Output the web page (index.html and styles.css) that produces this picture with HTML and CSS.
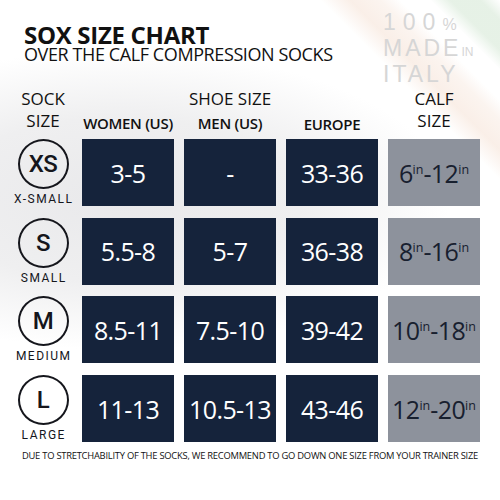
FILE: index.html
```html
<!DOCTYPE html>
<html>
<head>
<meta charset="utf-8">
<link rel="stylesheet" href="styles.css">
</head>
<body>
<div class="page">
  <header class="top">
    <div class="titles">
      <h1 class="title">SOX SIZE CHART</h1>
      <p class="subtitle">OVER THE CALF COMPRESSION SOCKS</p>
    </div>
    <div class="logo">
      <div class="logo-line digits">100<span class="pct">%</span></div>
      <div class="logo-line">MADE<span class="in">IN</span></div>
      <div class="logo-line">ITALY</div>
    </div>
  </header>

  <div class="heads">
    <div class="head h-label">SOCK<br>SIZE</div>
    <div class="head h-col"><span class="sub">WOMEN (US)</span></div>
    <div class="head h-col"><span class="group">SHOE SIZE</span><span class="sub">MEN (US)</span></div>
    <div class="head h-col"><span class="sub low">EUROPE</span></div>
    <div class="head h-calf">CALF<br>SIZE</div>
  </div>

  <div class="rows">
    <div class="row">
      <div class="size"><span class="circle">XS</span><span class="size-name">X-SMALL</span></div>
      <div class="cell">3-5</div>
      <div class="cell">-</div>
      <div class="cell">33-36</div>
      <div class="cell calf">6<sup>in</sup>-12<sup>in</sup></div>
    </div>
    <div class="row">
      <div class="size"><span class="circle">S</span><span class="size-name">SMALL</span></div>
      <div class="cell">5.5-8</div>
      <div class="cell">5-7</div>
      <div class="cell">36-38</div>
      <div class="cell calf">8<sup>in</sup>-16<sup>in</sup></div>
    </div>
    <div class="row">
      <div class="size"><span class="circle">M</span><span class="size-name">MEDIUM</span></div>
      <div class="cell">8.5-11</div>
      <div class="cell">7.5-10</div>
      <div class="cell">39-42</div>
      <div class="cell calf">10<sup>in</sup>-18<sup>in</sup></div>
    </div>
    <div class="row">
      <div class="size"><span class="circle">L</span><span class="size-name">LARGE</span></div>
      <div class="cell">11-13</div>
      <div class="cell">10.5-13</div>
      <div class="cell">43-46</div>
      <div class="cell calf">12<sup>in</sup>-20<sup>in</sup></div>
    </div>
  </div>

  <p class="note">DUE TO STRETCHABILITY OF THE SOCKS, WE RECOMMEND TO GO DOWN ONE SIZE FROM YOUR TRAINER SIZE</p>
</div>
</body>
</html>
```

FILE: styles.css
```css
html, body {
  margin: 0;
  padding: 0;
}
body {
  width: 500px;
  height: 500px;
  overflow: hidden;
  font-family: "Open Sans", "Noto Sans", sans-serif;
  color: #111;
  background:
    linear-gradient(45deg, rgba(255,255,255,0) 82%, rgba(246,228,216,0.6) 85%, rgba(246,228,216,0.4) 88%, rgba(255,255,255,0) 90%, rgba(255,255,255,0) 93%, rgba(224,238,224,0.8) 95%, rgba(224,238,224,0.8) 98%, rgba(255,255,255,0) 100%),
    radial-gradient(ellipse 330px 150px at 120px 200px, #e9e9eb 0%, #efeff0 55%, rgba(255,255,255,0) 100%),
    #ffffff;
}
.page {
  width: 500px;
  height: 500px;
}

/* Top */
.top {
  display: flex;
  justify-content: space-between;
  height: 88px;
}
.titles {
  padding-left: 24px;
  padding-top: 24px;
}
.title {
  margin: 0;
  font-size: 24px;
  line-height: 22px;
  font-weight: 700;
  letter-spacing: -0.3px;
  color: #111;
}
.subtitle {
  margin: 0;
  font-size: 18px;
  line-height: 16px;
  font-weight: 400;
  letter-spacing: -0.4px;
  color: #111;
}
.logo {
  padding-top: 9px;
  width: 117px;
  color: #d6d6d6;
  font-family: "Liberation Sans", Arial, sans-serif;
  font-size: 23px;
  line-height: 26px;
  font-weight: 400;
  letter-spacing: 3px;
}
.logo-line {
  white-space: nowrap;
  height: 26px;
}
.digits {
  letter-spacing: 7px;
}
.pct {
  font-size: 16px;
  letter-spacing: 0;
}
.in {
  font-size: 12px;
  letter-spacing: 0;
}

/* Headers */
.heads {
  display: grid;
  grid-template-columns: 72px 92px 92px 92px 92px;
  column-gap: 10px;
  height: 51px;
}
.heads > .head:first-child {
  margin-right: -10px;
}
.head {
  display: flex;
  flex-direction: column;
  align-items: center;
  text-align: center;
}
.h-label, .h-calf {
  font-size: 17px;
  line-height: 22px;
  padding-left: 4px;
}
.h-calf {
  padding-left: 0;
}
.group {
  font-size: 17px;
  line-height: 22px;
  white-space: nowrap;
}
.sub {
  font-size: 15px;
  line-height: 20px;
  font-weight: 600;
  letter-spacing: -0.3px;
  white-space: nowrap;
}
.h-col .sub {
  margin-top: 25px;
}
.h-col .group + .sub {
  margin-top: 3px;
}
.h-col .sub.low {
  margin-top: 26px;
}

/* Rows */
.rows {
  display: flex;
  flex-direction: column;
  gap: 11.7px;
}
.row {
  display: flex;
  height: 67px;
}
.size {
  width: 82px;
  padding-left: 4px;
  box-sizing: border-box;
  display: flex;
  flex-direction: column;
  align-items: center;
  flex: none;
}
.circle {
  width: 51px;
  height: 51px;
  box-sizing: border-box;
  border: 2.5px solid #15161c;
  border-radius: 50%;
  display: flex;
  align-items: center;
  justify-content: center;
  font-family: Roboto, "Noto Sans", sans-serif;
  font-weight: 500;
  font-size: 24px;
  letter-spacing: -0.5px;
  color: #15161c;
}
.size-name {
  margin-top: 4px;
  font-family: Roboto, "Noto Sans", sans-serif;
  font-size: 12px;
  line-height: 13px;
  letter-spacing: 1.5px;
  color: #15161c;
  padding-left: 1.5px;
  white-space: nowrap;
}
.cell {
  width: 92px;
  height: 67px;
  margin-left: 10px;
  flex: none;
  background: #15233b;
  color: #ffffff;
  display: flex;
  align-items: center;
  justify-content: center;
  font-size: 25px;
  letter-spacing: -0.6px;
  white-space: nowrap;
}
.size + .cell {
  margin-left: 0;
}
.cell.calf {
  background: #8d929c;
  color: #18202f;
}
.cell sup {
  font-size: 12.5px;
  line-height: 0;
  position: relative;
  top: -3px;
  letter-spacing: 0;
}

/* Note */
.note {
  margin: 7px 0 0;
  text-align: center;
  font-size: 9.4px;
  line-height: 14px;
  letter-spacing: -0.25px;
  white-space: nowrap;
  color: #111;
}
```
